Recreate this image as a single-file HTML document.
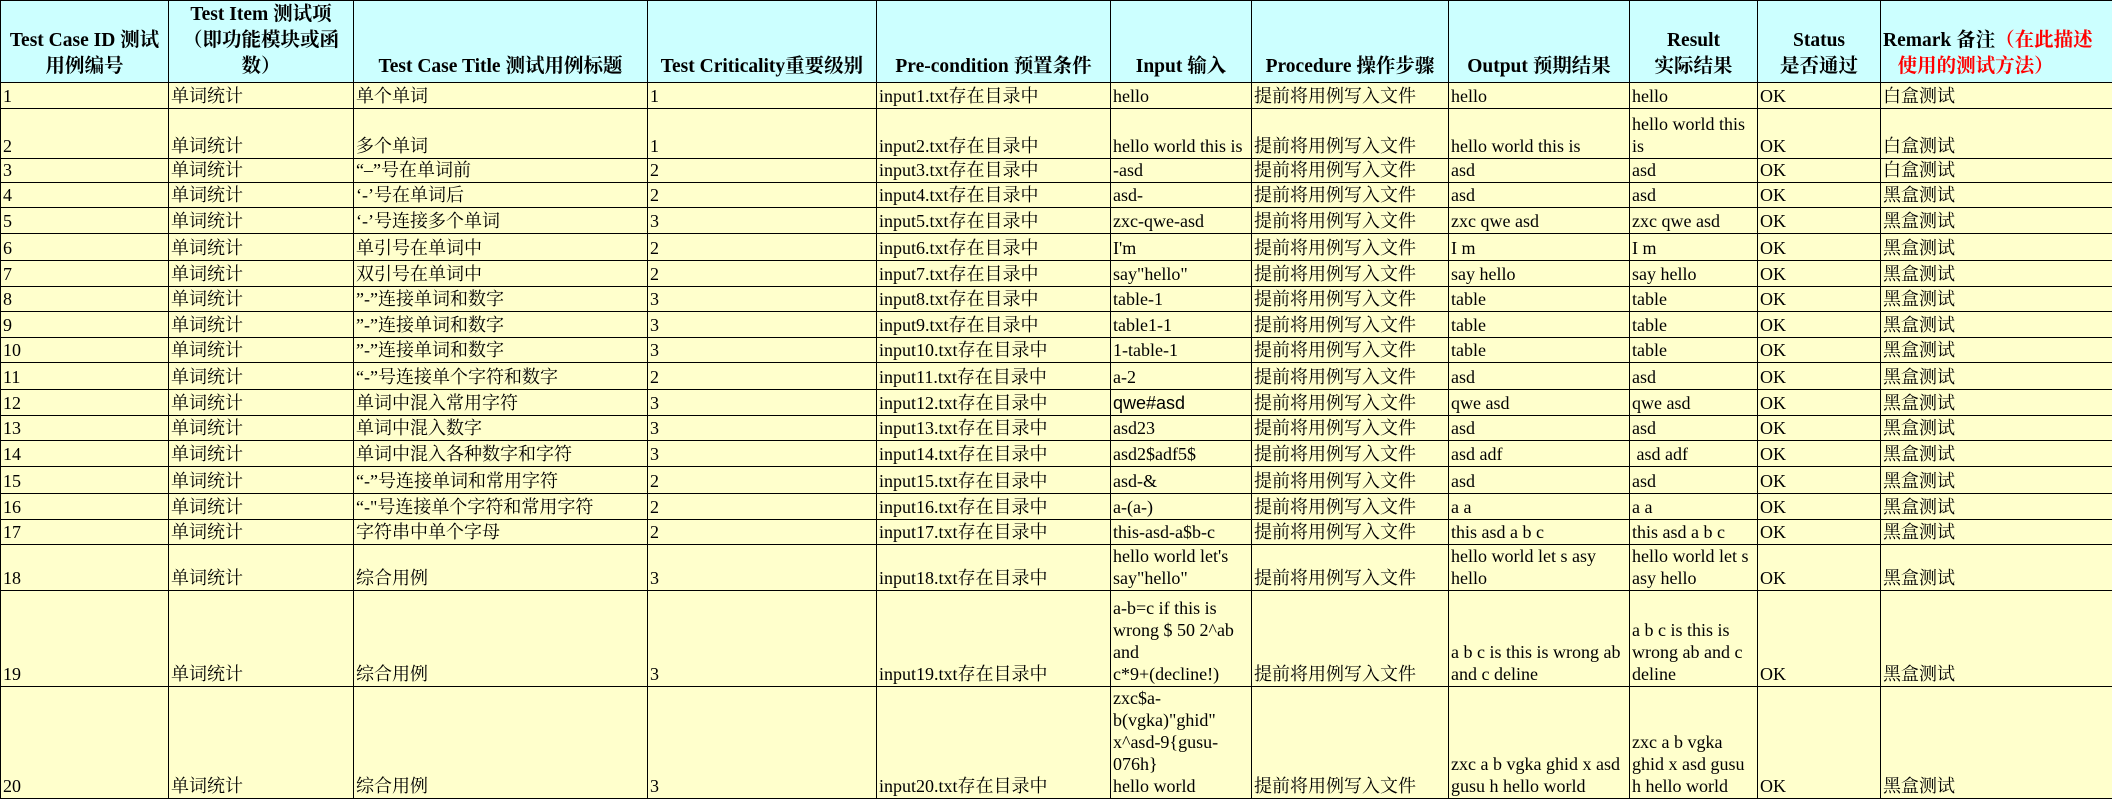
<!DOCTYPE html>
<html><head><meta charset="utf-8"><style>
html,body{margin:0;padding:0;background:#fff;}
body{width:2112px;height:800px;overflow:hidden;}
table{border-collapse:collapse;table-layout:fixed;width:2112px;font-family:"Liberation Serif","Noto Serif CJK SC","Noto Sans CJK SC",serif;font-size:18px;line-height:22px;}
td,th{border:1.5px solid #000;vertical-align:bottom;padding:0 2px 1px 2px;overflow:hidden;word-wrap:break-word;}
th{background:#ccffff;font-weight:bold;text-align:center;font-size:19.5px;line-height:26px;padding-bottom:2px;}
td{background:#ffffcc;color:#000;}
.r{color:#ff0000;}
.s{font-family:"Liberation Sans",sans-serif;}
</style></head><body>
<table>
<colgroup><col style="width:168px"><col style="width:185px"><col style="width:294px"><col style="width:229px"><col style="width:234px"><col style="width:141px"><col style="width:197px"><col style="width:181px"><col style="width:128px"><col style="width:123px"><col style="width:232px"></colgroup>
<tr style="height:82px"><th>Test Case ID 测试<br>用例编号</th><th>Test Item 测试项<br>（即功能模块或函<br>数）</th><th>Test Case Title 测试用例标题</th><th>Test Criticality重要级别</th><th>Pre-condition 预置条件</th><th>Input 输入</th><th>Procedure 操作步骤</th><th>Output 预期结果</th><th>Result<br>实际结果</th><th>Status<br>是否通过</th><th style="text-align:left">Remark 备注<span class="r">（在此描述<br>&nbsp;&nbsp;&nbsp;使用的测试方法）</span></th></tr>
<tr style="height:26px"><td>1</td><td>单词统计</td><td>单个单词</td><td>1</td><td>input1.txt存在目录中</td><td>hello</td><td>提前将用例写入文件</td><td>hello</td><td>hello</td><td>OK</td><td>白盒测试</td></tr>
<tr style="height:50px"><td>2</td><td>单词统计</td><td>多个单词</td><td>1</td><td>input2.txt存在目录中</td><td>hello world this is</td><td>提前将用例写入文件</td><td>hello world this is</td><td>hello world this<br>is</td><td>OK</td><td>白盒测试</td></tr>
<tr style="height:24px"><td>3</td><td>单词统计</td><td>“–”号在单词前</td><td>2</td><td>input3.txt存在目录中</td><td>-asd</td><td>提前将用例写入文件</td><td>asd</td><td>asd</td><td>OK</td><td>白盒测试</td></tr>
<tr style="height:25px"><td>4</td><td>单词统计</td><td>‘-’号在单词后</td><td>2</td><td>input4.txt存在目录中</td><td>asd-</td><td>提前将用例写入文件</td><td>asd</td><td>asd</td><td>OK</td><td>黑盒测试</td></tr>
<tr style="height:26px"><td>5</td><td>单词统计</td><td>‘-’号连接多个单词</td><td>3</td><td>input5.txt存在目录中</td><td>zxc-qwe-asd</td><td>提前将用例写入文件</td><td>zxc qwe asd</td><td>zxc qwe asd</td><td>OK</td><td>黑盒测试</td></tr>
<tr style="height:27px"><td>6</td><td>单词统计</td><td>单引号在单词中</td><td>2</td><td>input6.txt存在目录中</td><td>I'm</td><td>提前将用例写入文件</td><td>I m</td><td>I m</td><td>OK</td><td>黑盒测试</td></tr>
<tr style="height:26px"><td>7</td><td>单词统计</td><td>双引号在单词中</td><td>2</td><td>input7.txt存在目录中</td><td>say"hello"</td><td>提前将用例写入文件</td><td>say hello</td><td>say hello</td><td>OK</td><td>黑盒测试</td></tr>
<tr style="height:25px"><td>8</td><td>单词统计</td><td>”-”连接单词和数字</td><td>3</td><td>input8.txt存在目录中</td><td>table-1</td><td>提前将用例写入文件</td><td>table</td><td>table</td><td>OK</td><td>黑盒测试</td></tr>
<tr style="height:26px"><td>9</td><td>单词统计</td><td>”-”连接单词和数字</td><td>3</td><td>input9.txt存在目录中</td><td>table1-1</td><td>提前将用例写入文件</td><td>table</td><td>table</td><td>OK</td><td>黑盒测试</td></tr>
<tr style="height:25px"><td>10</td><td>单词统计</td><td>”-”连接单词和数字</td><td>3</td><td>input10.txt存在目录中</td><td>1-table-1</td><td>提前将用例写入文件</td><td>table</td><td>table</td><td>OK</td><td>黑盒测试</td></tr>
<tr style="height:27px"><td>11</td><td>单词统计</td><td>“-”号连接单个字符和数字</td><td>2</td><td>input11.txt存在目录中</td><td>a-2</td><td>提前将用例写入文件</td><td>asd</td><td>asd</td><td>OK</td><td>黑盒测试</td></tr>
<tr style="height:26px"><td>12</td><td>单词统计</td><td>单词中混入常用字符</td><td>3</td><td>input12.txt存在目录中</td><td class="s">qwe#asd</td><td>提前将用例写入文件</td><td>qwe asd</td><td>qwe asd</td><td>OK</td><td>黑盒测试</td></tr>
<tr style="height:25px"><td>13</td><td>单词统计</td><td>单词中混入数字</td><td>3</td><td>input13.txt存在目录中</td><td>asd23</td><td>提前将用例写入文件</td><td>asd</td><td>asd</td><td>OK</td><td>黑盒测试</td></tr>
<tr style="height:26px"><td>14</td><td>单词统计</td><td>单词中混入各种数字和字符</td><td>3</td><td>input14.txt存在目录中</td><td>asd2$adf5$</td><td>提前将用例写入文件</td><td>asd adf</td><td>&nbsp;asd adf</td><td>OK</td><td>黑盒测试</td></tr>
<tr style="height:27px"><td>15</td><td>单词统计</td><td>“-”号连接单词和常用字符</td><td>2</td><td>input15.txt存在目录中</td><td>asd-&amp;</td><td>提前将用例写入文件</td><td>asd</td><td>asd</td><td>OK</td><td>黑盒测试</td></tr>
<tr style="height:26px"><td>16</td><td>单词统计</td><td>“-"号连接单个字符和常用字符</td><td>2</td><td>input16.txt存在目录中</td><td>a-(a-)</td><td>提前将用例写入文件</td><td>a a</td><td>a a</td><td>OK</td><td>黑盒测试</td></tr>
<tr style="height:25px"><td>17</td><td>单词统计</td><td>字符串中单个字母</td><td>2</td><td>input17.txt存在目录中</td><td>this-asd-a$b-c</td><td>提前将用例写入文件</td><td>this asd a b c</td><td>this asd a b c</td><td>OK</td><td>黑盒测试</td></tr>
<tr style="height:46px"><td>18</td><td>单词统计</td><td>综合用例</td><td>3</td><td>input18.txt存在目录中</td><td>hello world let's<br>say"hello"</td><td>提前将用例写入文件</td><td>hello world let s asy<br>hello</td><td>hello world let s<br>asy hello</td><td>OK</td><td>黑盒测试</td></tr>
<tr style="height:96px"><td>19</td><td>单词统计</td><td>综合用例</td><td>3</td><td>input19.txt存在目录中</td><td>a-b=c if this is<br>wrong $ 50 2^ab<br>and<br>c*9+(decline!)</td><td>提前将用例写入文件</td><td>a b c is this is wrong ab<br>and c deline</td><td>a b c is this is<br>wrong ab and c<br>deline</td><td>OK</td><td>黑盒测试</td></tr>
<tr style="height:112px"><td>20</td><td>单词统计</td><td>综合用例</td><td>3</td><td>input20.txt存在目录中</td><td>zxc$a-<br>b(vgka)"ghid"<br>x^asd-9{gusu-<br>076h}<br>hello world</td><td>提前将用例写入文件</td><td>zxc a b vgka ghid x asd<br>gusu h hello world</td><td>zxc a b vgka<br>ghid x asd gusu<br>h hello world</td><td>OK</td><td>黑盒测试</td></tr>
</table>
</body></html>
